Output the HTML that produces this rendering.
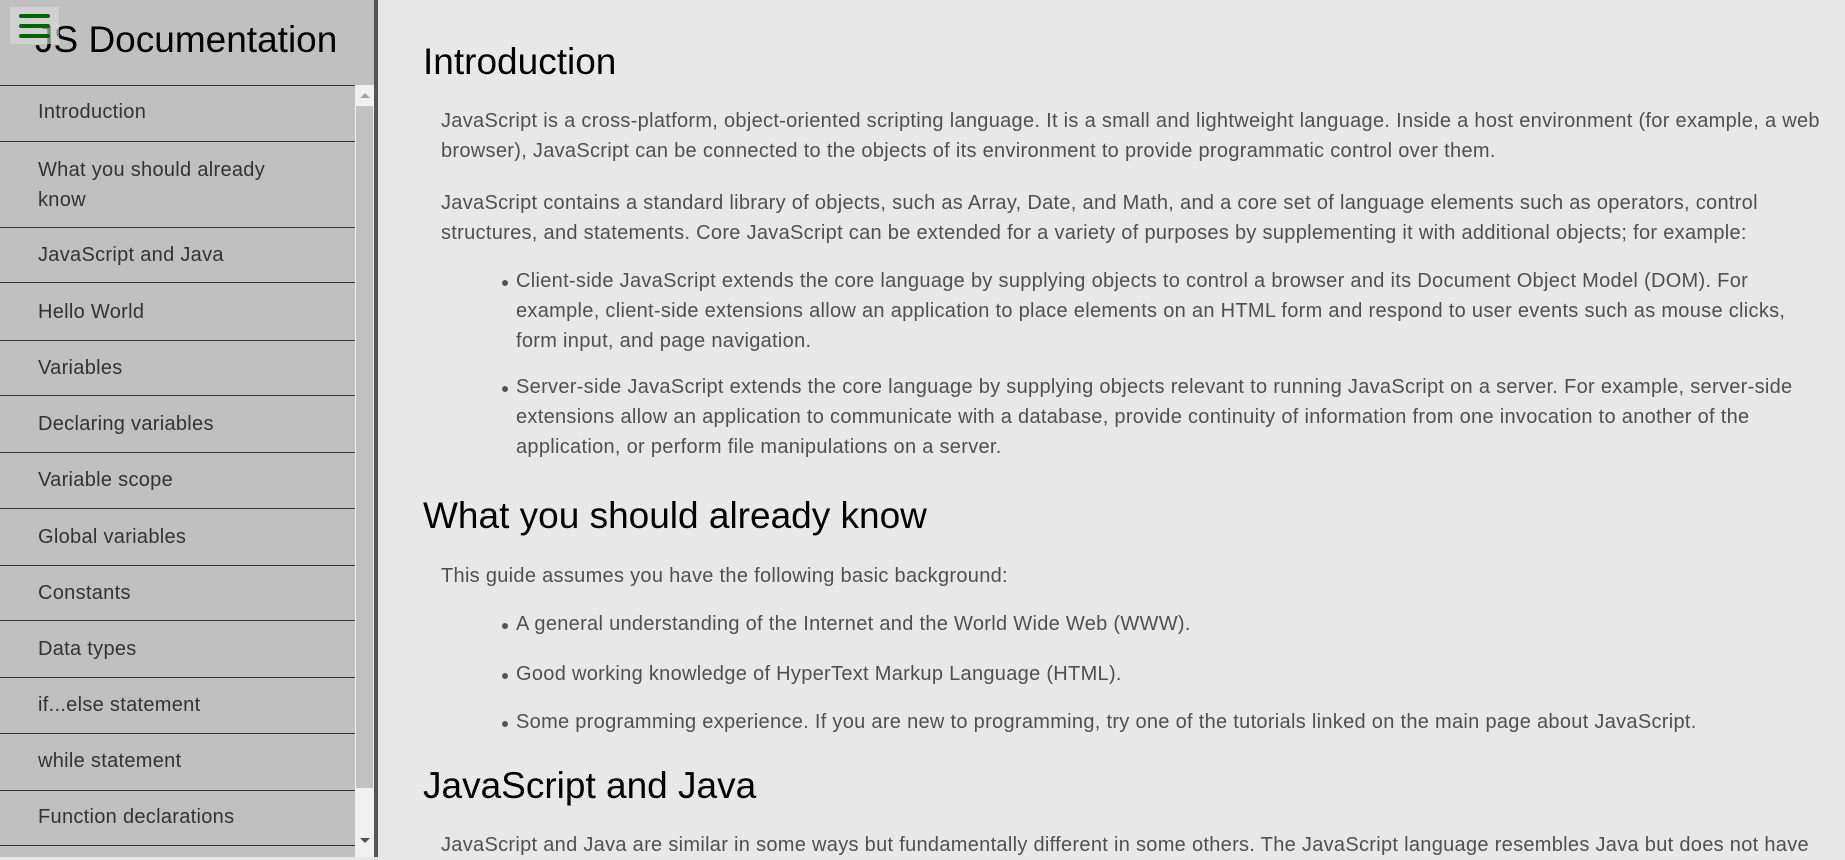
<!DOCTYPE html>
<html><head><meta charset="utf-8"><style>
*{margin:0;padding:0;box-sizing:border-box}
body{width:1845px;height:857px;overflow:hidden;background:#e8e8e8;font-family:"Liberation Sans",Arial,sans-serif;position:relative}
#side{position:absolute;left:0;top:0;height:857px;background:#c0c0c0;border-right:4px solid #555;width:378px}
.t{position:absolute;white-space:nowrap}
.h{font-size:37px;line-height:44px;color:#000}
.p{font-size:20px;line-height:30px;color:#505050;letter-spacing:0.3px}
.n{font-size:20px;line-height:30px;color:#333;letter-spacing:0.3px;left:38px}
.ln{position:absolute;left:0;width:355px;height:1px;background:#333}
.dot{position:absolute;width:6px;height:6px;border-radius:50%;background:#555}
</style></head><body>
<div id="side">
<div class="t h" style="left:35px;top:18px;font-size:37px">JS Documentation</div>
<div style="position:absolute;left:10px;top:7px;width:49px;height:37px;background:rgba(220,220,220,0.6)"></div>
<div style="position:absolute;left:19px;top:14px;width:31px;height:4px;background:#006400;border-radius:2px"></div>
<div style="position:absolute;left:19px;top:24px;width:31px;height:4px;background:#006400;border-radius:2px"></div>
<div style="position:absolute;left:19px;top:34px;width:31px;height:4px;background:#006400;border-radius:2px"></div>

<div class="ln" style="top:85px"></div>
<div class="ln" style="top:141px"></div>
<div class="ln" style="top:227px"></div>
<div class="ln" style="top:282px"></div>
<div class="ln" style="top:340px"></div>
<div class="ln" style="top:395px"></div>
<div class="ln" style="top:452px"></div>
<div class="ln" style="top:508px"></div>
<div class="ln" style="top:565px"></div>
<div class="ln" style="top:620px"></div>
<div class="ln" style="top:677px"></div>
<div class="ln" style="top:733px"></div>
<div class="ln" style="top:790px"></div>
<div class="ln" style="top:845px"></div>

<div class="t n" style="top:97px">Introduction</div>
<div class="t n" style="top:155px">What you should already<br>know</div>
<div class="t n" style="top:240px">JavaScript and Java</div>
<div class="t n" style="top:297px">Hello World</div>
<div class="t n" style="top:353px">Variables</div>
<div class="t n" style="top:409px">Declaring variables</div>
<div class="t n" style="top:465px">Variable scope</div>
<div class="t n" style="top:522px">Global variables</div>
<div class="t n" style="top:578px">Constants</div>
<div class="t n" style="top:634px">Data types</div>
<div class="t n" style="top:690px">if...else statement</div>
<div class="t n" style="top:746px">while statement</div>
<div class="t n" style="top:802px">Function declarations</div>

<div style="position:absolute;left:355px;top:85px;width:19px;height:772px;background:#f1f1f1"></div>
<div style="position:absolute;left:356px;top:106px;width:17px;height:682px;background:#c1c1c1"></div>
<div style="position:absolute;left:360px;top:93px;width:0;height:0;border-left:5px solid transparent;border-right:5px solid transparent;border-bottom:5px solid #a3a3a3"></div>
<div style="position:absolute;left:360px;top:838px;width:0;height:0;border-left:5px solid transparent;border-right:5px solid transparent;border-top:5px solid #505050"></div>
</div>

<div class="t h" style="left:423px;top:40px">Introduction</div>
<div class="t p" style="left:441px;top:106px">JavaScript is a cross-platform, object-oriented scripting language. It is a small and lightweight language. Inside a host environment (for example, a web</div>
<div class="t p" style="left:441px;top:136px">browser), JavaScript can be connected to the objects of its environment to provide programmatic control over them.</div>
<div class="t p" style="left:441px;top:188px">JavaScript contains a standard library of objects, such as Array, Date, and Math, and a core set of language elements such as operators, control</div>
<div class="t p" style="left:441px;top:218px">structures, and statements. Core JavaScript can be extended for a variety of purposes by supplementing it with additional objects; for example:</div>

<div class="dot" style="left:502px;top:280px"></div>
<div class="t p" style="left:516px;top:266px">Client-side JavaScript extends the core language by supplying objects to control a browser and its Document Object Model (DOM). For</div>
<div class="t p" style="left:516px;top:296px">example, client-side extensions allow an application to place elements on an HTML form and respond to user events such as mouse clicks,</div>
<div class="t p" style="left:516px;top:326px">form input, and page navigation.</div>
<div class="dot" style="left:502px;top:386px"></div>
<div class="t p" style="left:516px;top:372px">Server-side JavaScript extends the core language by supplying objects relevant to running JavaScript on a server. For example, server-side</div>
<div class="t p" style="left:516px;top:402px">extensions allow an application to communicate with a database, provide continuity of information from one invocation to another of the</div>
<div class="t p" style="left:516px;top:432px">application, or perform file manipulations on a server.</div>

<div class="t h" style="left:423px;top:494px">What you should already know</div>
<div class="t p" style="left:441px;top:561px">This guide assumes you have the following basic background:</div>
<div class="dot" style="left:502px;top:623px"></div>
<div class="t p" style="left:516px;top:609px">A general understanding of the Internet and the World Wide Web (WWW).</div>
<div class="dot" style="left:502px;top:673px"></div>
<div class="t p" style="left:516px;top:659px">Good working knowledge of HyperText Markup Language (HTML).</div>
<div class="dot" style="left:502px;top:721px"></div>
<div class="t p" style="left:516px;top:707px">Some programming experience. If you are new to programming, try one of the tutorials linked on the main page about JavaScript.</div>

<div class="t h" style="left:423px;top:764px">JavaScript and Java</div>
<div class="t p" style="left:441px;top:830px">JavaScript and Java are similar in some ways but fundamentally different in some others. The JavaScript language resembles Java but does not have</div>
</body></html>
